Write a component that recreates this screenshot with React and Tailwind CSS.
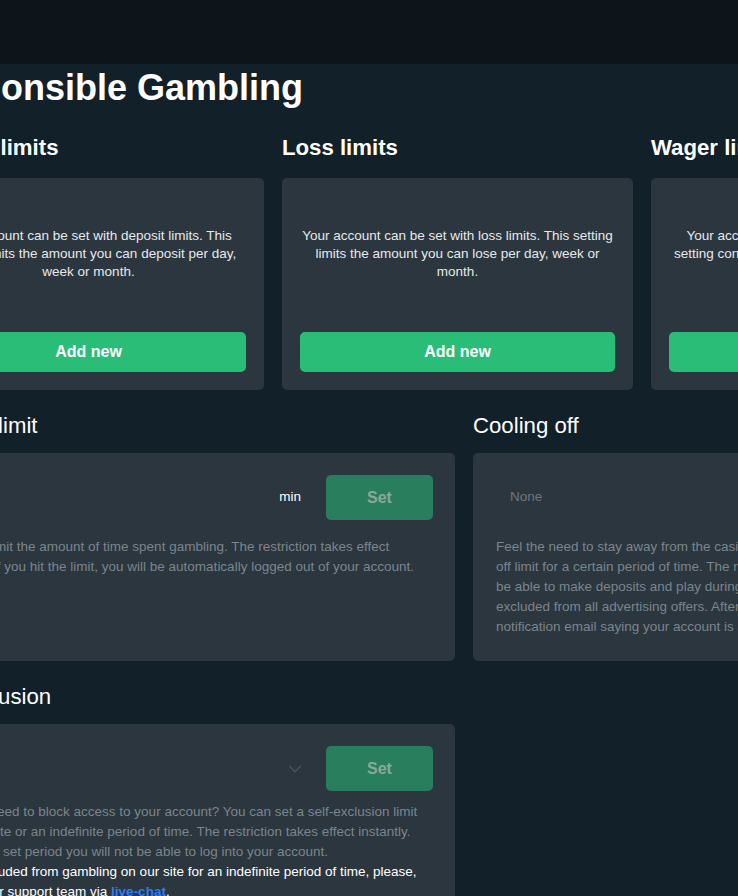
import { ChevronDown } from 'lucide-react';

const LIMITS = [
    {
        title: 'Deposit limits',
        text: 'Your account can be set with deposit limits. This setting limits the amount you can deposit per day, week or month.',
    },
    {
        title: 'Loss limits',
        text: 'Your account can be set with loss limits. This setting limits the amount you can lose per day, week or month.',
    },
    {
        title: 'Wager limits',
        text: 'Your account can be set with wager limits. This setting controls the amount you can wager per day, week or month.',
    },
];

function SetButton() {
    return (
        <button className="w-[107px] h-[45px] shrink-0 rounded-[5px] bg-[#297e5e] text-[#8aa99a] text-[16px] font-bold">
            Set
        </button>
    );
}

function Heading({ children }) {
    return <h2 className="text-[22.2px] leading-8 text-white mb-[11px]">{children}</h2>;
}

export default function App() {
    return (
        <div className="min-h-screen w-full overflow-hidden bg-[#12202a] font-['Liberation_Sans',Arial,sans-serif]">
            <div className="h-16 bg-[#0e151a]" />

            <div className="w-[1102px] -ml-[87px]">
                <h1 className="text-[36px] leading-10 font-bold text-white mt-[4px]">Responsible Gambling</h1>

                <div className="grid grid-cols-[repeat(3,351px)] gap-x-[18px] mt-[24px]">
                    {LIMITS.map((item) => (
                        <div key={item.title}>
                            <h2 className="text-[22.2px] leading-8 font-bold text-white mb-[14px]">{item.title}</h2>
                            <div className="h-[212px] flex flex-col rounded-[5px] bg-[#2b363f] px-[18px] pb-[18px] pt-[49px]">
                                <p className="text-[13.5px] leading-[18px] text-[#e6e9eb] text-center">{item.text}</p>
                                <button className="mt-auto h-10 w-full rounded-[5px] bg-[#29bd78] text-white text-[16px] font-bold">
                                    Add new
                                </button>
                            </div>
                        </div>
                    ))}
                </div>

                <div className="grid grid-cols-[542px_542px] gap-x-[18px] mt-[20px]">
                    <div>
                        <Heading>Session limit</Heading>
                        <div className="h-[208px] rounded-[5px] bg-[#2b363f] pl-[24px] pr-[22px] py-[22px]">
                            <div className="flex items-center">
                                <input className="flex-1 min-w-0 bg-transparent outline-none text-[13.5px] text-white" />
                                <span className="text-[13.5px] text-white">min</span>
                                <div className="ml-[25px]">
                                    <SetButton />
                                </div>
                            </div>
                            <p className="mt-[17px] pr-1 text-[13.5px] leading-5 text-[#7b858d]">
                                You can limit the amount of time spent gambling. The restriction takes effect instantly. If you hit the limit, you will be automatically logged out of your account.
                            </p>
                        </div>
                    </div>

                    <div>
                        <Heading>Cooling off</Heading>
                        <div className="h-[208px] rounded-[5px] bg-[#2b363f] pl-[23px] pr-[22px] py-[22px]">
                            <div className="flex items-center">
                                <div className="flex-1 flex items-center justify-between pl-[14px] pr-[20px]">
                                    <span className="text-[13.5px] text-[#6c767e]">None</span>
                                    <ChevronDown className="w-[22px] h-[22px] text-[#4a5660]" strokeWidth={1.3} />
                                </div>
                                <SetButton />
                            </div>
                            <p className="mt-[17px] text-[13.5px] leading-5 text-[#7b858d]">
                                Feel the need to stay away from the casino for a while? You can set a cooling-<br />
                                off limit for a certain period of time. The restriction is immediate. You will not<br />
                                be able to make deposits and play during the cooling-off period and you will be<br />
                                excluded from all advertising offers. After the period ends, you will receive a<br />
                                notification email saying your account is active again.
                            </p>
                        </div>
                    </div>

                    <div className="mt-[20px]">
                        <Heading>Self-exclusion</Heading>
                        <div className="rounded-[5px] bg-[#2b363f] pl-[24px] pr-[22px] pt-[22px] pb-8">
                            <div className="flex items-center">
                                <div className="flex-1 flex items-center justify-end pr-[20px]">
                                    <ChevronDown className="w-[22px] h-[22px] text-[#4a5660]" strokeWidth={1.3} />
                                </div>
                                <SetButton />
                            </div>
                            <p className="mt-[11px] pr-1 text-[13.5px] leading-5 text-[#7b858d]">
                                Feel the need to block access to your account? You can set a self-exclusion limit for a definite or an indefinite period of time. The restriction takes effect instantly. During the set period you will not be able to log into your account.
                            </p>
                            <p className="pr-1 text-[13.5px] leading-5 text-white">
                                To be excluded from gambling on our site for an indefinite period of time, please, contact our support team via{' '}
                                <a href="#" className="text-[#2f7cf6] font-bold">live-chat</a>.
                            </p>
                        </div>
                    </div>
                </div>
            </div>
        </div>
    );
}
